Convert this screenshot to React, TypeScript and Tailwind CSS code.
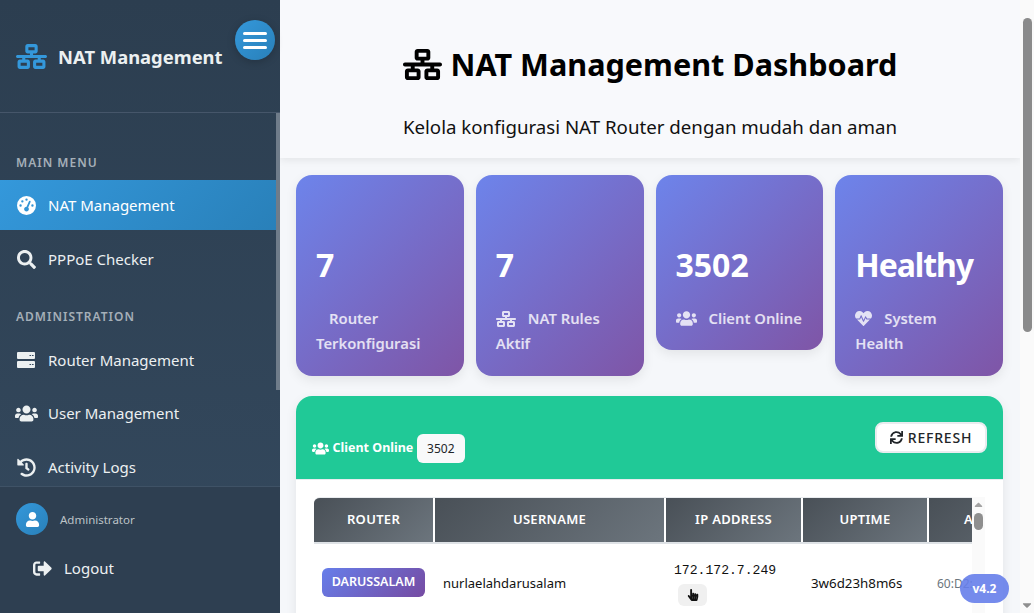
import type { ReactNode } from "react";
import {
  FaCaretDown,
  FaCaretUp,
  FaHandPointer,
  FaHeartbeat,
  FaHistory,
  FaSearch,
  FaSignOutAlt,
  FaSync,
  FaUser,
  FaUsers,
} from "react-icons/fa";
import { FaGaugeHigh, FaNetworkWired } from "react-icons/fa6";

const FONT = "font-['Noto_Sans','Open_Sans',sans-serif]";
const BADGE_GRADIENT = "bg-[linear-gradient(135deg,#667eea_0%,#764ba2_100%)]";
const CARD_GRADIENT = "bg-[linear-gradient(135deg,#6d84eb_0%,#7f55a6_100%)]";
const HEAD_GRADIENT = "bg-[linear-gradient(135deg,#495057_0%,#6c757d_100%)]";

function ServerIcon() {
  return (
    <svg width="18" height="16" viewBox="0 0 18 16" aria-hidden="true">
      <rect x="0" y="0" width="18" height="7" rx="1" fill="currentColor" />
      <rect x="0" y="9" width="18" height="7" rx="1" fill="currentColor" />
      <rect x="12.5" y="3" width="1.6" height="1" fill="#34495e" />
      <rect x="15" y="3" width="1.6" height="1" fill="#34495e" />
      <rect x="12.5" y="12" width="1.6" height="1" fill="#34495e" />
      <rect x="15" y="12" width="1.6" height="1" fill="#34495e" />
    </svg>
  );
}

function NavItem({ icon, label, active }: { icon: ReactNode; label: string; active?: boolean }) {
  return (
    <div
      className={`flex h-[50px] items-center gap-[12px] pl-[16px] text-[15px] ${
        active ? "bg-[linear-gradient(135deg,#3498db,#2980b9)] text-white" : "text-[#ecf0f1]"
      }`}
    >
      <span className="flex w-[20px] justify-center text-[19px]">{icon}</span>
      {label}
    </div>
  );
}

function StatCard({
  value,
  icon,
  label,
  rest,
  short,
  tight,
}: {
  value: string;
  icon?: ReactNode;
  label: string;
  rest?: string;
  short?: boolean;
  tight?: boolean;
}) {
  return (
    <div className={`${CARD_GRADIENT} ${short ? "self-start pb-[19px]" : "pb-[20px]"} rounded-[16px] px-[20px] pt-[65px] shadow-[0_4px_12px_rgba(0,0,0,0.08)]`}>
      <div className={`text-[32px] font-bold leading-[50px] text-white ${tight ? "tracking-[-1.1px]" : ""}`}>{value}</div>
      <div className="mt-[16px] text-[14.8px] font-semibold leading-[25px] text-white/80">
        <div className="flex h-[25px] items-center gap-[12px]">
          {icon}
          <span className={icon ? "" : "pl-[13px]"}>{label}</span>
        </div>
        {rest ? <div>{rest}</div> : null}
      </div>
    </div>
  );
}

function Th({ label, width }: { label: string; width: string }) {
  return (
    <div className={`${width} ${HEAD_GRADIENT} flex h-[44px] shrink-0 items-center justify-center text-[13px] font-semibold tracking-[0.3px] text-white`}>
      {label}
    </div>
  );
}

export default function App() {
  return (
    <div className={`${FONT} relative flex h-screen overflow-hidden bg-[#f5f7fa] text-black`}>
      <aside className="flex h-full w-[280px] shrink-0 flex-col bg-[linear-gradient(180deg,#2c3e50,#34495e)]">
        <div className="flex h-[113px] shrink-0 items-center gap-[11px] border-b border-[#46566a] pl-[16px] text-[18.4px] font-bold text-[#ecf0f1]">
          <FaNetworkWired className="text-[31px] text-[#3498db]" />
          <span className="pt-[1px]">NAT Management</span>
        </div>
        <div className="flex min-h-0 flex-1">
          <nav className="min-w-0 flex-1 overflow-hidden pt-[41px]">
            <div className="mb-[8px] pl-[16px] text-[12px] font-semibold leading-[18px] tracking-[1px] text-[#a5afb8]">MAIN MENU</div>
            <div className="flex flex-col gap-[4px]">
              <NavItem active icon={<FaGaugeHigh />} label="NAT Management" />
              <NavItem icon={<FaSearch />} label="PPPoE Checker" />
            </div>
            <div className="mb-[9px] mt-[24px] pl-[16px] text-[12px] font-semibold leading-[18px] tracking-[1px] text-[#a5afb8]">ADMINISTRATION</div>
            <div className="flex flex-col gap-[3.5px]">
              <NavItem icon={<ServerIcon />} label="Router Management" />
              <NavItem icon={<FaUsers className="shrink-0 text-[23px]" />} label="User Management" />
              <NavItem icon={<FaHistory />} label="Activity Logs" />
            </div>
          </nav>
          <div className="w-[4px] shrink-0">
            <div className="h-[277px] bg-[#6f7c8a]" />
          </div>
        </div>
        <div className="h-[127px] shrink-0 border-t border-[#3f5266] bg-[#2e3f51] pl-[16px] pt-[16px]">
          <div className="flex items-center gap-[12px] text-[11.5px] text-[#bdc3c7]">
            <div className="flex h-[32px] w-[32px] items-center justify-center rounded-full bg-[linear-gradient(135deg,#3498db,#2980b9)] text-[15px] text-white">
              <FaUser />
            </div>
            <span className="pt-[1px]">Administrator</span>
          </div>
          <div className="ml-[17px] mt-[22px] flex items-center gap-[12px] text-[15px] text-[#ecf0f1]">
            <FaSignOutAlt className="text-[19px]" />
            Logout
          </div>
        </div>
      </aside>

      <main className="min-w-0 flex-1 overflow-hidden">
        <header className="flex h-[158px] flex-col items-center bg-[#f8f9fc] pt-[37px] shadow-[0_2px_8px_rgba(0,0,0,0.08)]">
          <h1 className="flex items-center gap-[9px] text-[30.6px] font-bold leading-[54px]">
            <FaNetworkWired className="text-[39px]" />
            NAT Management Dashboard
          </h1>
          <p className="mt-[22px] text-[18.7px] leading-[28px] text-[#111]">Kelola konfigurasi NAT Router dengan mudah dan aman</p>
        </header>

        <div className="pl-[16px] pr-[17px] pt-[17px]">
          <div className="grid grid-cols-4 gap-[12px]">
            <StatCard value="7" label="Router" rest="Terkonfigurasi" />
            <StatCard value="7" icon={<FaNetworkWired className="text-[20px]" />} label="NAT Rules" rest="Aktif" />
            <StatCard value="3502" icon={<FaUsers className="text-[21px]" />} label="Client Online" short />
            <StatCard value="Healthy" icon={<FaHeartbeat className="text-[17px]" />} label="System" rest="Health" tight />
          </div>

          <section className="mt-[20px] overflow-hidden rounded-[16px] bg-white shadow-[0_4px_12px_rgba(0,0,0,0.08)]">
            <div className="flex h-[84px] justify-between border-b border-[#e9ecef] bg-[#20c997] pl-[16px] pr-[16px]">
              <div className="mt-[38px] flex h-[29px] items-center gap-[3.5px] text-[12.5px] font-bold text-white">
                <FaUsers className="text-[17px]" />
                Client Online
                <span className="flex h-[29px] w-[48px] items-center justify-center rounded-[6px] bg-[#f8f9fa] text-[12px] font-normal text-[#212529]">3502</span>
              </div>
              <button className="mt-[26px] flex h-[31px] w-[112px] items-center justify-center gap-[5px] rounded-[8px] border-2 border-[#e9ecef] bg-white pb-[1px] text-[14px] font-medium tracking-[0.8px] text-[#212529]">
                <FaSync className="text-[13px]" />
                REFRESH
              </button>
            </div>
            <div className="flex pl-[18px] pr-[18px] pt-[17px]">
              <div className="h-[200px] w-[658px] overflow-hidden rounded-tl-[6px] border-t border-[#e9ecef]">
                <div className="flex w-[800px] gap-[2px] border-b-2 border-[#dee2e6]">
                  <Th label="ROUTER" width="w-[119px]" />
                  <Th label="USERNAME" width="w-[229px]" />
                  <Th label="IP ADDRESS" width="w-[135px]" />
                  <Th label="UPTIME" width="w-[124px]" />
                  <div className={`${HEAD_GRADIENT} flex h-[44px] w-[180px] items-center pl-[35px] text-[13px] font-semibold tracking-[0.3px] text-white`}>ADDRESS</div>
                </div>
                <div className="flex w-[800px] gap-[2px] text-[13px] text-[#111]">
                  <div className="flex w-[119px] shrink-0 pl-[8px] pt-[24px]">
                    <span className={`${BADGE_GRADIENT} flex h-[29px] w-[103px] items-center justify-center rounded-[6px] text-[12.5px] font-semibold text-white`}>DARUSSALAM</span>
                  </div>
                  <div className="w-[229px] shrink-0 pl-[8px] pt-[30px]">nurlaelahdarusalam</div>
                  <div className="w-[135px] shrink-0 pl-[8px] pt-[18px]">
                    <div className="font-['Liberation_Mono',monospace] text-[13.1px] leading-[18px]">172.172.7.249</div>
                    <button className="ml-[4px] mt-[4px] flex h-[22px] w-[29px] items-center justify-center rounded-[6px] bg-[#f0f0f0] pb-[1px] text-[12px]">
                      <FaHandPointer />
                    </button>
                  </div>
                  <div className="w-[124px] shrink-0 pl-[8px] pt-[30px] text-[13.3px]">3w6d23h8m6s</div>
                  <div className="pl-[8px] pt-[31px] text-[12px] text-[#6c757d]">60:D2:48:1A:7C:90</div>
                </div>
              </div>
              <div className="flex w-[13px] shrink-0 flex-col items-center bg-[#fafafa]">
                <FaCaretUp className="mt-[1px] text-[13px] text-[#a3a3a3]" />
                <div className="mt-[2px] h-[17px] w-[9px] rounded-full bg-[#8f8f8f]" />
              </div>
            </div>
          </section>
        </div>
      </main>

      <div className="flex h-full w-[14px] shrink-0 flex-col items-center bg-[#fafafa]">
        <div className="mt-[18px] h-[314px] w-[9px] rounded-full bg-[#8b8b8b]" />
        <FaCaretDown className="mb-[1px] mt-auto text-[14px] text-[#8f8f8f]" />
      </div>

      <div className="absolute left-[960px] top-[574px] flex h-[29px] w-[49px] items-center justify-center rounded-full bg-[#667eea]/90 text-[12px] font-bold text-white">
        v4.2
      </div>

      <button className="absolute left-[235px] top-[20px] flex h-[40px] w-[40px] items-center justify-center rounded-full bg-[linear-gradient(135deg,#3498db,#2980b9)] shadow-[0_2px_8px_rgba(0,0,0,0.2)]">
        <span className="flex w-[24px] flex-col gap-[4px]">
          <span className="h-[3px] rounded-full bg-white" />
          <span className="h-[3px] rounded-full bg-white" />
          <span className="h-[3px] rounded-full bg-white" />
        </span>
      </button>
    </div>
  );
}
